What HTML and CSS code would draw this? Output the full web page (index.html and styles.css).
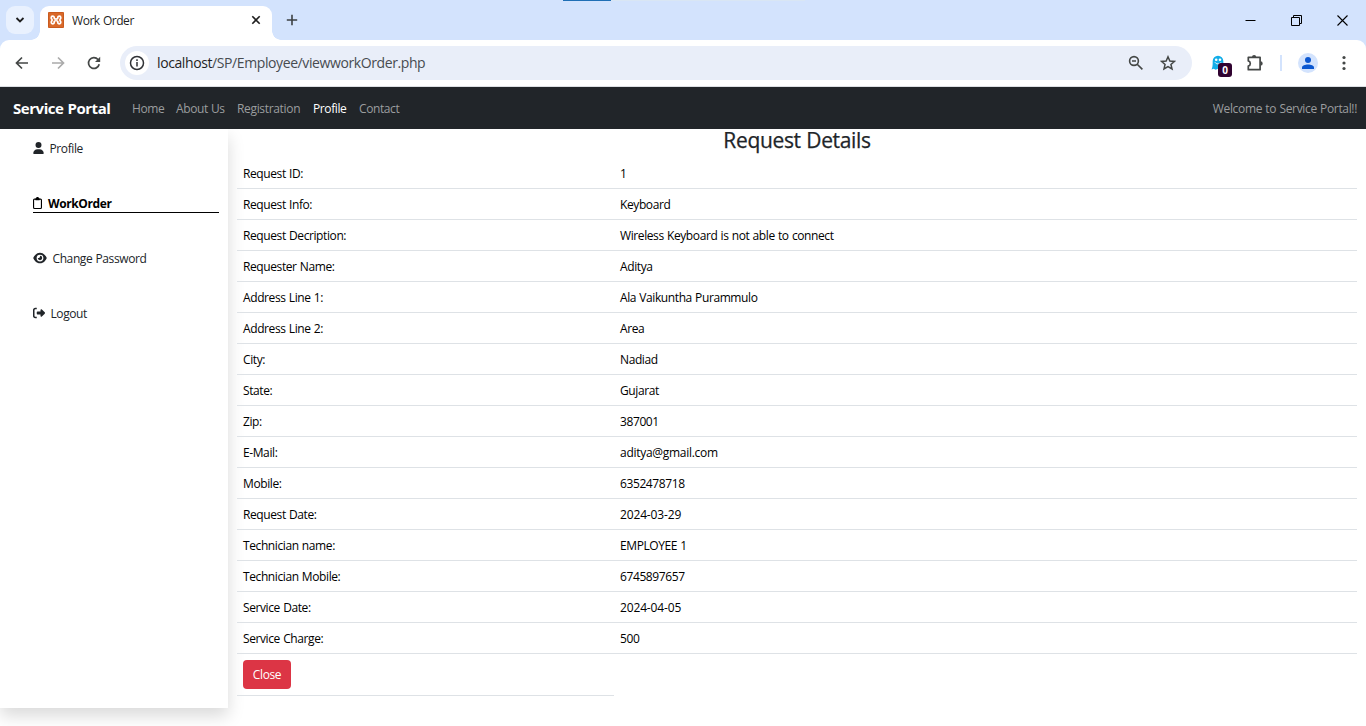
FILE: index.html
```html
<!DOCTYPE html>
<html lang="en">
<head>
<meta charset="utf-8">
<title>Work Order</title>
<link rel="stylesheet" href="styles.css">
</head>
<body>
<div class="browser">
  <div class="tabstrip">
    <span class="load-bar"></span><span class="load-track"></span>
    <button class="tab-search"><svg width="28" height="28" viewBox="0 0 28 28"><path d="M10.500 12l3.500 3.500 3.500-3.500" fill="none" stroke="#1f1f1f" stroke-width="1.800"/></svg></button>
    <div class="tab">
      <svg class="favicon" width="16" height="16" viewBox="0 0 16 16"><rect width="16" height="16" rx="1" fill="#d9692a"/><rect x=".5" y=".5" width="15" height="15" rx="1" fill="none" stroke="#c85a1e"/><path d="M6.200 6.300V5.200C6.200 4 3.200 3.600 3.200 5.700c0 1.200.9 1.300.9 2.300s-.9 1.100-.9 2.300c0 2.100 3 1.700 3 .5V9.600c0-1 3.600-1 3.600 0v1.200c0 1.200 3 1.600 3-.5 0-1.200-.9-1.300-.9-2.300s.9-1.100.9-2.300c0-2.100-3-1.700-3-.5v1.100c0 1-3.600 1-3.600 0z" fill="none" stroke="#fff" stroke-width="1.700"/></svg>
      <span class="tab-title">Work Order</span>
      <svg class="tab-close" width="10" height="10" viewBox="0 0 10 10"><path d="M1.300 1.300l7.400 7.400M8.700 1.300L1.300 8.700" stroke="#1f1f1f" stroke-width="1.600"/></svg>
    </div>
    <svg class="new-tab" width="12" height="12" viewBox="0 0 12 12"><path d="M6 .8v10.400M.8 6h10.400" stroke="#3c4043" stroke-width="1.600"/></svg>
    <div class="window-buttons">
      <svg width="11" height="11" viewBox="0 0 11 11"><path d="M.5 5.500h10" stroke="#000"/></svg>
      <svg width="11" height="11" viewBox="0 0 11 11"><path d="M.5 2.500h8v8h-8zM2.500 2.500v-2h8v8h-2" fill="none" stroke="#000"/></svg>
      <svg width="11" height="11" viewBox="0 0 11 11"><path d="M.5.5l10 10M10.500.5l-10 10" stroke="#000" stroke-width="1.100"/></svg>
    </div>
  </div>
  <div class="toolbar">
    <div class="nav-buttons">
      <svg width="14" height="14" viewBox="0 0 14 14"><path d="M13 7H2M7 1.500L1.500 7 7 12.500" fill="none" stroke="#444746" stroke-width="1.700"/></svg>
      <svg width="14" height="14" viewBox="0 0 14 14"><path d="M1 7h11M7 1.500L12.500 7 7 12.500" fill="none" stroke="#ababab" stroke-width="1.700"/></svg>
      <svg width="14" height="14" viewBox="0 0 14 14"><path d="M12.200 8.200A5.400 5.400 0 1 1 11 3.500l1.500 1.500" fill="none" stroke="#444746" stroke-width="1.700"/><path d="M13.200.8v5.100H8z" fill="#444746"/></svg>
    </div>
    <div class="omnibox">
      <span class="site-info"><svg width="16" height="16" viewBox="0 0 16 16"><circle cx="8" cy="8" r="6.500" fill="none" stroke="#303236" stroke-width="1.500"/><path d="M8 7v4.500M8 4.300v1.600" stroke="#303236" stroke-width="1.500"/></svg></span>
      <span class="url"><span class="host">localhost</span>/SP/Employee/viewworkOrder.php</span>
      <svg class="zoom-icon" width="16" height="16" viewBox="0 0 16 16"><circle cx="6" cy="6" r="4.400" fill="none" stroke="#444746" stroke-width="1.600"/><path d="M9.200 9.200l5.200 5.200M4 6h4" stroke="#444746" stroke-width="1.600"/></svg>
      <svg width="16" height="16" viewBox="0 0 16 16"><path d="M8 1.800l1.850 4.200 4.600.4-3.500 3 1.050 4.500L8 11.500l-4 2.400 1.050-4.500-3.500-3L6.150 6z" fill="none" stroke="#444746" stroke-width="1.500"/></svg>
    </div>
    <span class="ghost"><svg width="14" height="16" viewBox="0 0 14 16"><path d="M.5 14.500c1-2 1.200-4 1.200-8.500a5.300 5.300 0 0 1 10.600 0c0 4.500.2 6.500 1.200 8.500l-2.200-.7-2 1-2.300-1-2.300 1-2-1z" fill="#12ade8"/><circle cx="5.200" cy="4.800" r="1.300" fill="#fff"/><circle cx="9" cy="4.800" r="1.300" fill="#fff"/><path d="M4 7.400c1.500 2 4.500 2 6 0" fill="none" stroke="#fff"/></svg><b class="count">0</b></span>
    <svg class="puzzle" width="18" height="18" viewBox="0 0 18 18"><path d="M2.300 3.300h11.800v12.400H2.300v-3.600q2-.5 2-2.600t-2-2.600z" fill="none" stroke="#444746" stroke-width="1.700" stroke-linejoin="round"/><path d="M6 3a2.100 2.100 0 0 1 4.200 0zM14.500 7.200a2.200 2.200 0 0 1 0 4.400z" fill="#444746"/></svg>
    <span class="separator"></span>
    <svg class="avatar" width="20" height="20" viewBox="0 0 20 20"><circle cx="10" cy="10" r="10" fill="#d3e3fd"/><circle cx="10" cy="7" r="3" fill="#0b57d0"/><path d="M4 16v-1.500c0-4 12-4 12 0V16z" fill="#0b57d0"/></svg>
    <svg class="menu-dots" width="4" height="16" viewBox="0 0 4 16"><g fill="#444746"><circle cx="2" cy="2.500" r="1.600"/><circle cx="2" cy="8" r="1.600"/><circle cx="2" cy="13.500" r="1.600"/></g></svg>
  </div>
</div>

<nav class="navbar">
  <a class="brand">Service Portal</a>
  <a class="home">Home</a><a class="about">About Us</a><a class="registration">Registration</a><a class="current">Profile</a><a class="contact">Contact</a>
  <span class="welcome">Welcome to Service Portal!!</span>
</nav>

<div class="page">
  <aside class="sidebar">
    <a class="side-link"><svg width="11" height="12" viewBox="0 0 448 512"><path fill="currentColor" d="M224 256A128 128 0 1 0 224 0a128 128 0 1 0 0 256zm-45.700 48C79.800 304 0 383.800 0 482.300 0 498.700 13.300 512 29.700 512h388.600c16.400 0 29.700-13.300 29.700-29.700C448 383.800 368.200 304 269.700 304z"/></svg><span>Profile</span></a>
    <a class="side-link active"><svg width="9" height="12" viewBox="0 0 384 512"><path fill="none" stroke="currentColor" stroke-width="48" d="M64 88h256q40 0 40 40v320q0 40-40 40H64q-40 0-40-40V128q0-40 40-40z"/><path fill="currentColor" d="M96 64h32c10-84 118-84 128 0h32v56q0 16-16 16H112q-16 0-16-16z"/></svg><span class="active-label">WorkOrder</span></a>
    <a class="side-link"><svg width="14" height="12" viewBox="0 0 576 512"><path fill="currentColor" fill-rule="evenodd" d="M288 32c-81 0-145 37-192 80C49 156 18 208 3 244c-3 8-3 16 0 24 15 36 46 88 93 132 47 43 111 80 192 80s145-37 192-80c47-44 78-96 93-132 3-8 3-16 0-24-15-36-46-88-93-132-47-43-111-80-192-80zM144 256a144 144 0 1 1 288 0 144 144 0 1 1-288 0zm144-64c0 35-29 64-64 64-7 0-14-1-20-3-6-2-12 2-12 8a96 96 0 1 0 103-101c-6 0-10 6-8 12 1 6 1 13 1 20z"/></svg><span>Change Password</span></a>
    <a class="side-link"><svg width="12" height="12" viewBox="0 0 512 512"><path fill="currentColor" d="M377.900 105.900l122.800 122.800c7.200 7.200 11.300 17.100 11.300 27.300s-4.100 20.100-11.300 27.300L377.900 406.100c-6.400 6.400-15 9.900-24 9.900-18.700 0-33.900-15.200-33.900-33.900V320H192c-17.700 0-32-14.300-32-32v-64c0-17.700 14.300-32 32-32h128v-62.100c0-18.700 15.200-33.900 33.900-33.900 9 0 17.600 3.600 24 9.900zM160 96H96c-17.700 0-32 14.300-32 32v256c0 17.700 14.300 32 32 32h64v64H96c-53 0-96-43-96-96V128c0-53 43-96 96-96h64z"/></svg><span>Logout</span></a>
  </aside>
  <main class="content">
    <h3 class="heading">Request Details</h3>
    <table class="details">
      <tr><td>Request ID:</td><td>1</td></tr>
      <tr><td>Request Info:</td><td>Keyboard</td></tr>
      <tr><td>Request Decription:</td><td>Wireless Keyboard is not able to connect</td></tr>
      <tr><td>Requester Name:</td><td>Aditya</td></tr>
      <tr><td>Address Line 1:</td><td>Ala Vaikuntha Purammulo</td></tr>
      <tr><td>Address Line 2:</td><td>Area</td></tr>
      <tr><td>City:</td><td>Nadiad</td></tr>
      <tr><td>State:</td><td>Gujarat</td></tr>
      <tr><td>Zip:</td><td>387001</td></tr>
      <tr><td>E-Mail:</td><td class="email">aditya@gmail.com</td></tr>
      <tr><td>Mobile:</td><td>6352478718</td></tr>
      <tr><td>Request Date:</td><td class="date">2024-03-29</td></tr>
      <tr><td>Technician name:</td><td>EMPLOYEE 1</td></tr>
      <tr><td>Technician Mobile:</td><td>6745897657</td></tr>
      <tr><td>Service Date:</td><td class="date">2024-04-05</td></tr>
      <tr><td>Service Charge:</td><td>500</td></tr>
      <tr class="actions"><td><button class="close-btn">Close</button></td></tr>
    </table>
  </main>
</div>
</body>
</html>
```
FILE: styles.css
```css
* { box-sizing: border-box; }
body { margin: 0; height: 726px; overflow: hidden; background: #fff; color: #212529; font: 12px/18px "Open Sans", "Noto Sans", sans-serif; letter-spacing: -0.4px; word-spacing: 0.5px; }
svg { display: block; flex: none; }
button { border: 0; padding: 0; font: inherit; letter-spacing: inherit; }

.browser { height: 87px; background: #d3e3fd; border-bottom: 1px solid #dcdfe3; }
.tabstrip { position: relative; height: 40px; display: flex; align-items: center; padding: 0 18px 0 6px; }
.load-bar { position: absolute; left: 563px; top: 0; width: 48px; height: 1px; background: #1f6fb5; }
.load-track { position: absolute; left: 611px; top: 0; width: 194px; height: 1px; background: #d9e6f4; }
.tab-search { width: 28px; height: 28px; border-radius: 9px; background: #e9f1fe; }
.tab { position: relative; align-self: flex-end; width: 232px; height: 34px; margin-left: 6px; padding: 0 11px 6px 8px; display: flex; align-items: center; background: #fff; border-radius: 9px 9px 0 0; }
.tab::before, .tab::after { content: ""; position: absolute; bottom: 0; width: 9px; height: 9px; }
.tab::before { left: -9px; background: radial-gradient(circle at 0 0, transparent 8.500px, #fff 9px); }
.tab::after { right: -9px; background: radial-gradient(circle at 100% 0, transparent 8.500px, #fff 9px); }
.tab-title { margin-left: 8px; padding-top: 2px; color: #1f1f1f; letter-spacing: -0.45px; }
.tab-close { margin-left: auto; }
.new-tab { margin-left: 14px; }
.window-buttons { display: flex; gap: 35px; margin-left: auto; }
.toolbar { height: 46px; background: #fff; border-radius: 9px 9px 0 0; display: flex; align-items: center; padding-left: 15px; }
.nav-buttons { display: flex; gap: 22px; }
.omnibox { width: 1072px; height: 34px; margin-left: 19px; border-radius: 17px; background: #e9eef9; display: flex; align-items: center; padding: 0 16px 0 5px; }
.site-info { width: 24px; height: 24px; border-radius: 12px; background: #fff; padding: 4px; }
.url { margin-left: 8px; font-size: 14px; letter-spacing: -0.4px; color: #474b50; }
.host { color: #1f1f1f; }
.zoom-icon { margin-left: auto; margin-right: 16px; }
.ghost { position: relative; margin-left: 19px; }
.count { position: absolute; left: 7px; top: 8px; width: 14px; height: 14px; border-radius: 3px; background: #300330; color: #fff; font: bold 10px/14px "Open Sans", sans-serif; letter-spacing: 0; text-align: center; }
.puzzle { margin-left: 21px; }
.separator { width: 2px; height: 16px; margin-left: 16px; background: #d3e3fd; }
.avatar { margin-left: 16px; }
.menu-dots { margin-left: 24px; }

.navbar { height: 42px; display: flex; align-items: center; padding: 2px 9px 0 13px; background: #212529; color: #9b9d9f; position: relative; z-index: 2; }
.brand { width: 119px; padding-bottom: 2px; font-size: 15px; font-weight: 700; color: #fff; letter-spacing: -0.45px; }
.home { width: 44px; }
.about { width: 61px; }
.registration { width: 76px; letter-spacing: -0.33px; }
.current { width: 46px; color: #fff; font-weight: 500; }
.welcome { margin-left: auto; letter-spacing: -0.34px; }

.page { display: flex; }
.sidebar { width: 228px; height: 579px; padding: 10px 9px 0 33px; background: #fff; box-shadow: 0 8px 16px rgba(0, 0, 0, .15); }
.side-link { display: flex; align-items: center; gap: 5.500px; height: 19px; margin-bottom: 36px; }
.side-link svg { margin-bottom: 2px; }
.active { gap: 6px; color: #000; font-weight: 700; border-bottom: 1px solid #000; }
.active svg { margin-bottom: 0; }
.active-label { padding-top: 2px; }
.content { flex: 1; padding: 0 9px; }
.heading { height: 29px; margin: 0; font-size: 21px; line-height: 22px; font-weight: 500; text-align: center; letter-spacing: -0.35px; -webkit-text-stroke: 0.25px #212529; }
.details { width: 1120px; table-layout: fixed; border-collapse: separate; border-spacing: 0; color: #000; }
.details td { height: 31px; padding: 1px 6px 0; border-bottom: 1px solid #dee2e6; }
.details td:first-child { width: 377px; }
.details td.date { letter-spacing: -0.15px; }
.details td.email { letter-spacing: -0.28px; }
.details .actions td { height: 42px; padding-top: 0; }
.close-btn { display: block; width: 48px; height: 29px; border-radius: 4px; background: #dc3545; color: #fff; }
```
